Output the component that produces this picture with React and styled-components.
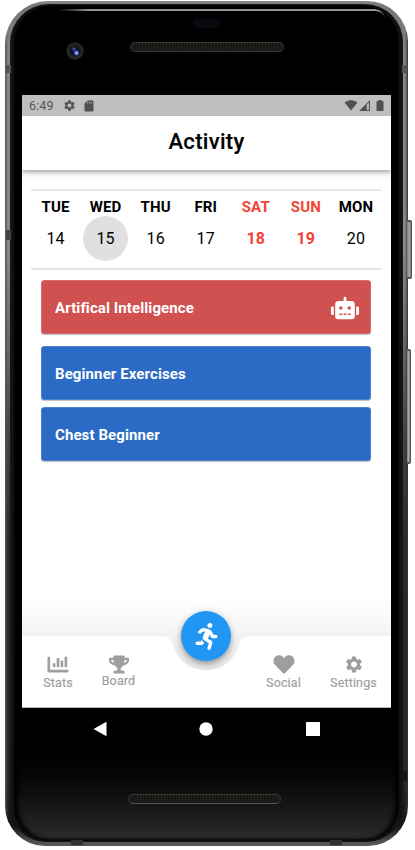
import React from "react";
import styled, { createGlobalStyle } from "styled-components";
import { FaChartBar, FaTrophy, FaHeart, FaRunning, FaRobot } from "react-icons/fa";
import { MdSettings } from "react-icons/md";

const GlobalStyle = createGlobalStyle`
  * { box-sizing: border-box; }
  body { margin: 0; background: #fff; overflow: hidden; font-family: Roboto, sans-serif; }
`;

const Stage = styled.main`
  position: relative;
  width: 415px;
  height: 850px;
  padding: 1px 7px 4px 5px;
`;

const Shell = styled.div`
  height: 845px;
  padding: 4px 6px 5px;
  border-radius: 43px 41px 40px 40px;
  background: linear-gradient(90deg, #555 0, #0000 3px, #0000 400px, #333 403px),
    linear-gradient(#8b8b8b 0, #777 4px, #858585 70px, #898989 250px, #666 350px, #454545 430px, #282828 540px, #252525 780px, #151515 825px, #555 842px);
`;

const Bezel = styled.div`
  position: relative;
  height: 836px;
  padding: 0 11px;
  border-radius: 38px 37px 35px 35px;
  display: flex;
  flex-direction: column;
  background: linear-gradient(#000 0, #000 748px, #080808 775px, #1b1b1b 810px, #2b2b2b 833px, #050505 836px);
  box-shadow: inset 3px 0 2px #141414, inset -3px 0 2px #141414, inset 7px 0 4px #000, inset -7px 0 4px #000, 0 0 0 1px #161616;
`;

const SideButton = styled.div`
  position: absolute;
  left: 407px;
  top: ${(p) => p.$top}px;
  width: ${(p) => p.$width}px;
  height: ${(p) => p.$height}px;
  border-radius: 0 2px 2px 0;
  border: solid #555;
  border-width: 2px 1px 2px 0;
  background: linear-gradient(90deg, #777, #aaa 50%, #777);
`;

const AntennaBand = styled.div`
  position: absolute;
  left: ${(p) => p.$left}px;
  top: ${(p) => p.$top}px;
  width: ${(p) => p.$width}px;
  height: ${(p) => p.$height}px;
  background: ${(p) => p.$color};
`;

const Forehead = styled.div`
  height: 90px;
  flex: none;
  display: grid;
  grid-template-columns: 108px 155px 1fr;
  align-items: start;
  padding-top: 37px;
`;

const Glint = styled.div`
  position: absolute;
  left: 48px;
  top: 4px;
  width: 326px;
  height: 10px;
  border-top: 2px solid #8c9695;
  border-radius: 2px 26px 0 0;
  mask-image: linear-gradient(90deg, transparent, #000 30px);
`;

const Sensor = styled.div`
  position: absolute;
  left: 182px;
  top: 14px;
  width: 27px;
  height: 9px;
  border-radius: 5px;
  background: #090a10;
`;

const Camera = styled.div`
  width: 18px;
  height: 18px;
  margin-left: 44px;
  border-radius: 50%;
  background: radial-gradient(circle at 10.5px 11px, #96aaf5 0 1px, #3652b5 2px, transparent 3px),
    radial-gradient(circle at 8px 7px, #3657bf 0 1px, transparent 2px),
    radial-gradient(circle, #101329 0 4px, #191817 5px, #292929 7px, #171717 9px);
`;

const Speaker = styled.div`
  width: ${(p) => p.$width}px;
  height: 10px;
  border: 1px solid #373735;
  border-bottom-color: ${(p) => (p.$bright ? "#555550" : "#3a3a38")};
  border-radius: 5px;
  background: repeating-linear-gradient(90deg, #171613 0 2px, #24221e 2px 3px);
`;

const Screen = styled.section`
  width: 369px;
  height: 613px;
  flex: none;
  display: flex;
  flex-direction: column;
  background: #fff;
  border-bottom: 1px solid #b5bab7;
`;

const StatusBar = styled.div`
  height: 21px;
  flex: none;
  display: flex;
  align-items: center;
  padding: 0 6px 0 7px;
  color: #515151;
  background: #bfbfbf;
`;

const Clock = styled.span`
  width: 34px;
  font-size: 12.5px;
  letter-spacing: 0.15px;
  color: #555;
`;

const StatusIcons = styled.div`
  display: flex;
  align-items: center;
  gap: ${(p) => p.$gap || 0}px;
  margin-left: ${(p) => (p.$end ? "auto" : "0")};
  svg { display: block; }
`;

const Header = styled.header`
  height: 54px;
  flex: none;
  display: grid;
  place-items: center;
  padding-bottom: 2px;
  z-index: 1;
  box-shadow: 0 2px 4px #0004, 0 3px 9px #0002;
  clip-path: inset(0 0 -16px 0);
`;

const Title = styled.h1`
  margin: 0;
  font-size: 22px;
  font-weight: 500;
  line-height: 26px;
  letter-spacing: 0.3px;
  color: #000;
  -webkit-text-stroke: 0.15px;
`;

const Week = styled.div`
  height: 81px;
  flex: none;
  margin: 19px 10px 0 8.5px;
  display: grid;
  grid-template-columns: repeat(7, 1fr);
  border: solid #e6e6e6;
  border-width: 2px 0;
`;

const Day = styled.div`
  display: flex;
  flex-direction: column;
  align-items: center;
  padding-top: 7px;
  color: ${(p) => (p.$weekend ? "#f44336" : "#000")};
`;

const DayName = styled.span`
  height: 18px;
  font-size: 15px;
  line-height: 18px;
  font-weight: 700;
  letter-spacing: 0.15px;
`;

const DayNumber = styled.span`
  width: 45px;
  height: 45px;
  display: grid;
  place-items: center;
  border-radius: 50%;
  font-size: 16px;
  letter-spacing: 0.15px;
  font-weight: ${(p) => (p.$weekend ? 700 : 400)};
  background: ${(p) => (p.$selected ? "#e0e0e0" : "transparent")};
`;

const Activities = styled.div`
  flex: 1;
  display: flex;
  flex-direction: column;
  padding: 10px 20px 0 19px;
`;

const ActivityCard = styled.div`
  height: 54px;
  flex: none;
  display: flex;
  align-items: center;
  justify-content: space-between;
  padding: 1px 12px 0 14px;
  margin-bottom: ${(p) => p.$after}px;
  border-radius: 3.5px;
  color: #fff;
  font-size: 15px;
  font-weight: 700;
  letter-spacing: 0.1px;
  background: ${(p) => p.$color};
  box-shadow: inset 0 0 0 0.5px #ffffff55, 0 1px 1px #0004;
`;

const Fade = styled.div`
  height: 41px;
  flex: none;
  background: linear-gradient(#fff, #fbfbfb 40%, #f2f2f2);
`;

const BottomNav = styled.nav`
  position: relative;
  height: 71px;
  flex: none;
  display: grid;
  grid-template-columns: 72px 49px 117px 47px 9px 75px;
  background: #fff;
`;

const NavItem = styled.div`
  grid-column: ${(p) => p.$col};
  grid-row: 1;
  display: flex;
  flex-direction: column;
  align-items: center;
  padding-top: ${(p) => p.$top}px;
  color: #9e9e9e;
  font-size: 12.5px;
  line-height: 15px;
  letter-spacing: 0.15px;
  -webkit-text-stroke: 0.15px;
  svg { display: block; height: 21px; margin-bottom: ${(p) => p.$gap || 0}px; stroke-width: 0; }
`;

const Notch = styled.svg`
  position: absolute;
  left: 137px;
  top: 0;
`;

const Fab = styled.button`
  position: absolute;
  left: 159px;
  top: -25px;
  width: 50px;
  height: 50px;
  padding: 0;
  border: 0;
  border-radius: 50%;
  display: grid;
  place-items: center;
  color: #fff;
  background: #2196f3;
  box-shadow: 0 3px 5px #0004, 0 1px 9px #0002;
`;

const SystemNav = styled.div`
  height: 42px;
  flex: none;
  display: grid;
  grid-template-columns: 22px 22px 22px;
  justify-content: center;
  column-gap: 84.5px;
  place-items: center;
  padding-right: 1px;
  svg { display: block; }
`;

const Chin = styled.div`
  padding: 44px 0 0 106px;
`;

const week = [
  ["TUE", 14], ["WED", 15], ["THU", 16], ["FRI", 17], ["SAT", 18], ["SUN", 19], ["MON", 20],
];

const activities = [
  { name: "Artifical Intelligence", color: "#d15151", after: 12, ai: true },
  { name: "Beginner Exercises", color: "#2b6bc5", after: 7 },
  { name: "Chest Beginner", color: "#2b6bc5", after: 0 },
];

export default function App() {
  return (
    <Stage>
      <GlobalStyle />
      <SideButton $top={220} $height={59} $width={5} />
      <SideButton $top={349} $height={115} $width={4} />
      <Shell>
        <Bezel>
          <Glint />
          <Sensor />
          <Forehead>
            <Camera />
            <Speaker $width={154} />
          </Forehead>
          <Screen>
            <StatusBar>
              <Clock>6:49</Clock>
              <StatusIcons $gap={7}>
                <MdSettings size={13} />
                <svg width="11" height="12" viewBox="0 0 11 12">
                  <path fill="currentColor" fillRule="evenodd" d="M4.5 .5h5q1 0 1 1v9q0 1-1 1h-7q-1 0-1-1v-7zM4.3 2v1.6h.8V2zm2 0v1.6h.8V2zm2 0v1.6h.8V2z" />
                </svg>
              </StatusIcons>
              <StatusIcons $end>
                <svg width="41" height="13" viewBox="0 0 41 13" fill="currentColor">
                  <path d="M.5 3.5Q7-1.5 13.5 3.5L7 11.6z" />
                  <path fillRule="evenodd" d="M15 12 26 1v11zM22.7 5.7V11h2.2V3.6z" />
                  <path d="M34.5 1h3v1H39q.5 0 .5.6v8.8q0 .6-.6.6h-5.8q-.6 0-.6-.6V2.6q0-.6.5-.6h1.5z" />
                </svg>
              </StatusIcons>
            </StatusBar>
            <Header><Title>Activity</Title></Header>
            <Week>
              {week.map(([name, date]) => {
                const weekend = name === "SAT" || name === "SUN";
                return (
                  <Day key={name} $weekend={weekend}>
                    <DayName>{name}</DayName>
                    <DayNumber $weekend={weekend} $selected={date === 15}>{date}</DayNumber>
                  </Day>
                );
              })}
            </Week>
            <Activities>
              {activities.map((a) => (
                <ActivityCard key={a.name} $color={a.color} $after={a.after}>
                  {a.name}
                  {a.ai && <FaRobot size={28} />}
                </ActivityCard>
              ))}
            </Activities>
            <Fade />
            <BottomNav>
              <NavItem $col={1} $top={18}><FaChartBar size={22} />Stats</NavItem>
              <NavItem $col={2} $top={18} $gap={-2}><FaTrophy size={20} />Board</NavItem>
              <NavItem $col={4} $top={18}><FaHeart size={22} />Social</NavItem>
              <NavItem $col={6} $top={18}><MdSettings size={20} />Settings</NavItem>
              <Notch width="94" height="35" viewBox="0 0 94 35">
                <defs>
                  <linearGradient id="notchShade" x1="0" y1="0" x2="0" y2="1">
                    <stop stopColor="#f2f2f2" />
                    <stop offset="1" stopColor="#e4e4e4" />
                  </linearGradient>
                </defs>
                <path fill="url(#notchShade)" d="M0 0C9 0 12 3 14 9C19 25 31 34 47 34S75 25 80 9C82 3 85 0 94 0z" />
              </Notch>
              <Fab aria-label="Start activity"><FaRunning size={27} /></Fab>
            </BottomNav>
          </Screen>
          <SystemNav>
            <svg width="14" height="16" viewBox="0 0 14 16"><path fill="#fff" d="M.5 8 13.5 .8v14.4z" /></svg>
            <svg width="14" height="14" viewBox="0 0 14 14"><circle cx="7" cy="7" r="6.7" fill="#fff" /></svg>
            <svg width="14" height="14" viewBox="0 0 14 14"><rect width="14" height="14" rx=".5" fill="#fff" /></svg>
          </SystemNav>
          <Chin><Speaker $width={153} $bright /></Chin>
        </Bezel>
      </Shell>
      <AntennaBand $left={6} $top={65} $width={5} $height={8} $color="#555" />
      <AntennaBand $left={402} $top={65} $width={5} $height={8} $color="#555" />
      <AntennaBand $left={6} $top={230} $width={5} $height={10} $color="#444" />
      <AntennaBand $left={402} $top={771} $width={5} $height={10} $color="#171717" />
      <AntennaBand $left={71} $top={840} $width={12} $height={5} $color="#303030" />
      <AntennaBand $left={330} $top={840} $width={12} $height={5} $color="#303030" />
    </Stage>
  );
}
